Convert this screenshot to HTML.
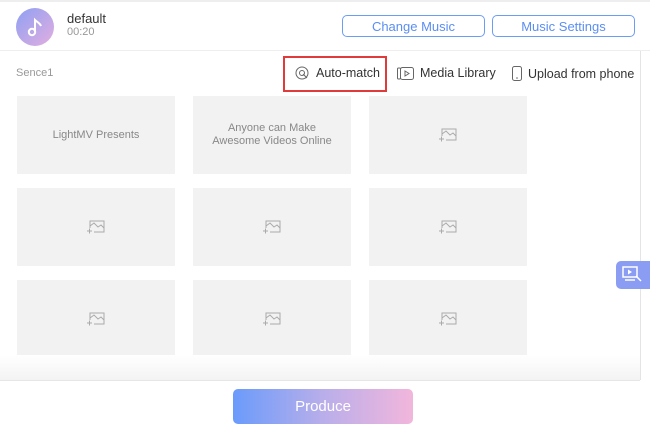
<!DOCTYPE html><html><head><style>
body{margin:0;width:650px;height:430px;background:#fff;font-family:"Liberation Sans",sans-serif;position:relative;overflow:hidden}
.a{position:absolute}
.t{position:absolute;width:158px;height:78px;background:#f2f2f2;display:flex;align-items:center;justify-content:center;text-align:center;font-size:11px;color:#888;line-height:13px}
.btn{position:absolute;top:15px;height:22px;border:1px solid #6d9cf5;border-radius:5px;color:#5b8ef2;font-size:13px;display:flex;align-items:center;justify-content:center;box-sizing:border-box}
.lnk{position:absolute;top:66px;font-size:12.5px;color:#333;display:flex;align-items:center;gap:6px}
</style></head><body>
<div class="a" style="left:0;top:0;width:650px;height:2px;background:#eee"></div>
<div class="a" style="left:16px;top:8px;width:38px;height:38px;border-radius:50%;background:linear-gradient(135deg,#8ea0f3,#e3aee0)"></div>
<svg class="a" style="left:24px;top:15px" width="22" height="24" viewBox="0 0 22 24"><circle cx="8" cy="17" r="3.2" fill="none" stroke="#fff" stroke-width="2"/><path d="M11 17V5c2 2 5 3 6 6" fill="none" stroke="#fff" stroke-width="2"/></svg>
<div class="a" style="left:67px;top:11px;font-size:13px;color:#333">default</div>
<div class="a" style="left:67px;top:26px;font-size:11px;color:#999">00:20</div>
<div class="btn" style="left:342px;width:143px">Change Music</div>
<div class="btn" style="left:492px;width:143px">Music Settings</div>
<div class="a" style="left:0;top:50px;width:650px;height:1px;background:#eee"></div>
<div class="a" style="left:640px;top:51px;width:1px;height:329px;background:#e4e4e4"></div>
<div class="a" style="left:16px;top:67px;font-size:11px;color:#999">Sence1</div>
<div class="a" style="left:283px;top:56px;width:104px;height:36px;border:2px solid #e03a3a;box-sizing:border-box"></div>
<div class="lnk" style="left:294px"><svg width="16" height="14" viewBox="0 0 16 14"><circle cx="8" cy="7" r="6" fill="none" stroke="#666"/><circle cx="8" cy="7" r="2.5" fill="none" stroke="#666"/><path d="M9 8l4 4" stroke="#666"/></svg>Auto-match</div>
<div class="lnk" style="left:397px"><svg width="17" height="13" viewBox="0 0 17 13"><rect x="0.5" y="1" width="3" height="11" rx="1" fill="none" stroke="#666"/><rect x="3.5" y="0.5" width="13" height="12" rx="2" fill="none" stroke="#666"/><path d="M8 4l4 2.5L8 9z" fill="none" stroke="#666"/></svg>Media Library</div>
<div class="lnk" style="left:512px"><svg width="10" height="15" viewBox="0 0 10 15"><rect x="0.5" y="0.5" width="9" height="14" rx="2" fill="none" stroke="#666"/><circle cx="5" cy="12" r="0.8" fill="#666"/></svg>Upload from phone</div>
<div class="t" style="left:17px;top:96px">LightMV Presents</div>
<div class="t" style="left:193px;top:96px">Anyone can Make<br>Awesome Videos Online</div>
<div class="t" style="left:369px;top:96px"><svg width="18" height="14" viewBox="0 0 18 14"><path d="M3 8V1h14v11H7M3 6l4-3 4 4 3-2 3 3" fill="none" stroke="#aaa"/><path d="M0 11h5M2.5 8.5v5" stroke="#aaa"/></svg></div>
<div class="t" style="left:17px;top:188px"><svg width="18" height="14" viewBox="0 0 18 14"><path d="M3 8V1h14v11H7M3 6l4-3 4 4 3-2 3 3" fill="none" stroke="#aaa"/><path d="M0 11h5M2.5 8.5v5" stroke="#aaa"/></svg></div>
<div class="t" style="left:193px;top:188px"><svg width="18" height="14" viewBox="0 0 18 14"><path d="M3 8V1h14v11H7M3 6l4-3 4 4 3-2 3 3" fill="none" stroke="#aaa"/><path d="M0 11h5M2.5 8.5v5" stroke="#aaa"/></svg></div>
<div class="t" style="left:369px;top:188px"><svg width="18" height="14" viewBox="0 0 18 14"><path d="M3 8V1h14v11H7M3 6l4-3 4 4 3-2 3 3" fill="none" stroke="#aaa"/><path d="M0 11h5M2.5 8.5v5" stroke="#aaa"/></svg></div>
<div class="t" style="left:17px;top:280px"><svg width="18" height="14" viewBox="0 0 18 14"><path d="M3 8V1h14v11H7M3 6l4-3 4 4 3-2 3 3" fill="none" stroke="#aaa"/><path d="M0 11h5M2.5 8.5v5" stroke="#aaa"/></svg></div>
<div class="t" style="left:193px;top:280px"><svg width="18" height="14" viewBox="0 0 18 14"><path d="M3 8V1h14v11H7M3 6l4-3 4 4 3-2 3 3" fill="none" stroke="#aaa"/><path d="M0 11h5M2.5 8.5v5" stroke="#aaa"/></svg></div>
<div class="t" style="left:369px;top:280px"><svg width="18" height="14" viewBox="0 0 18 14"><path d="M3 8V1h14v11H7M3 6l4-3 4 4 3-2 3 3" fill="none" stroke="#aaa"/><path d="M0 11h5M2.5 8.5v5" stroke="#aaa"/></svg></div>
<div class="a" style="left:616px;top:261px;width:34px;height:28px;background:#8b9cf3;border-radius:5px 0 0 5px"></div>
<svg class="a" style="left:622px;top:266px" width="22" height="18" viewBox="0 0 22 18"><rect x="1" y="1" width="14" height="10" fill="none" stroke="#fff" stroke-width="1.5"/><path d="M6 3.5l4 2.5-4 2.5z" fill="#fff"/><path d="M3 14h10M14 10l5 5" stroke="#fff" stroke-width="1.5"/></svg>
<div class="a" style="left:0;top:355px;width:640px;height:25px;background:linear-gradient(#fff,#f3f3f3)"></div>
<div class="a" style="left:0;top:380px;width:640px;height:1px;background:#e6e6e6"></div>
<div class="a" style="left:233px;top:389px;width:180px;height:35px;border-radius:5px;background:linear-gradient(90deg,#6a9bfb,#b9aeea,#f2b6dc);color:#fff;font-size:15px;display:flex;align-items:center;justify-content:center">Produce</div>
</body></html>
